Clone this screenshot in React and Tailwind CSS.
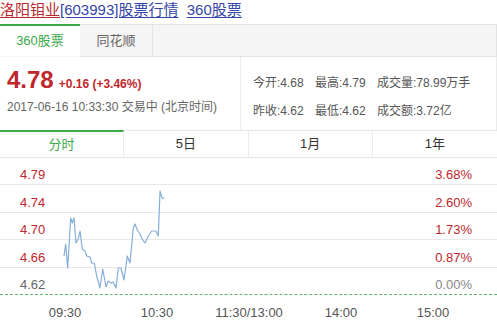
const LINE = [
  [64, 255], [65.7, 243], [67.7, 267], [70.7, 217], [72.3, 222], [74, 217], [76, 242], [78.3, 238],
  [80, 230], [82.3, 248], [85, 250], [86.7, 255], [90, 256], [91.7, 262], [94.3, 262], [96.7, 275],
  [100, 287], [102.7, 268], [106, 286], [108.3, 280], [111, 282], [113.3, 281], [116, 287], [118.3, 267],
  [121, 267], [124, 279], [127.3, 255], [130, 262], [133.3, 227], [135, 223], [137.3, 229], [140, 233],
  [142.7, 239], [145, 242], [148.3, 235], [151.7, 230], [156, 230], [158.3, 235], [160, 190], [161.7, 196],
  [164, 198],
]

const ROWS = [
  { left: '4.79', right: '3.68%', red: true },
  { left: '4.74', right: '2.60%', red: true },
  { left: '4.70', right: '1.73%', red: true },
  { left: '4.66', right: '0.87%', red: true },
  { left: '4.62', right: '0.00%', red: false },
]

const TIMES = ['09:30', '10:30', '11:30/13:00', '14:00', '15:00']

export default function App() {
  const points = LINE.map(([x, y]) => `${x},${y - 157}`).join(' ')

  return (
    <div className="w-[497px] h-[322px] overflow-hidden bg-white text-[#333]" style={{ fontFamily: '"Liberation Sans", "Noto Sans CJK SC", sans-serif' }}>

      {/* title */}
      <div className="h-[24px] pt-[1px] text-[15px] leading-[18px] whitespace-nowrap">
        <span className="text-[#b8282e] underline underline-offset-2">洛阳钼业</span>
        <span className="text-[#3446a8] underline underline-offset-2">[603993]股票行情</span>
        <span className="text-[#3446a8]">&nbsp;&nbsp;</span>
        <span className="text-[#3446a8] underline underline-offset-2">360股票</span>
      </div>

      {/* source tabs */}
      <div className="h-[33px] flex border-t border-[#e3e3e3] bg-[#f5f5f5] border-r">
        <div className="w-[80px] h-full bg-white border-t-2 border-[#3ca94a] -mt-px flex items-center justify-center text-[13px] text-[#3ca94a]">
          360股票
        </div>
        <div className="w-[73px] flex items-center justify-center text-[13px] text-[#666] border-r border-b border-[#e3e3e3]">
          同花顺
        </div>
        <div className="flex-1 border-b border-[#e3e3e3]" />
      </div>

      {/* quote */}
      <div className="h-[73px] flex border-r border-[#ececec]">
        <div className="w-[241px] border-r border-[#ececec] pl-[7px] pt-[9px]">
          <div className="flex items-baseline gap-[5px] text-[#c0272d] font-bold">
            <span className="text-[24px] leading-[28px]">4.78</span>
            <span className="text-[12px]">+0.16 (+3.46%)</span>
          </div>
          <div className="mt-[5px] text-[12px] leading-[16px] text-[#666] whitespace-nowrap">
            2017-06-16 10:33:30 交易中 (北京时间)
          </div>
        </div>
        <div className="flex-1 pl-[12px] pt-[19px] text-[12px] text-[#555] leading-[14px]">
          <div className="grid grid-cols-[62px_62px_1fr] gap-y-[14px] whitespace-nowrap">
            <span>今开:4.68</span>
            <span>最高:4.79</span>
            <span>成交量:78.99万手</span>
            <span>昨收:4.62</span>
            <span>最低:4.62</span>
            <span>成交额:3.72亿</span>
          </div>
        </div>
      </div>

      {/* period tabs */}
      <div className="h-[28px] grid grid-cols-4 border-t border-b border-[#e6e6e6] text-[13px]">
        <div className="border-t-2 border-[#3ca94a] -mt-px flex items-center justify-center text-[#3ca94a] border-r border-r-[#ececec]">分时</div>
        <div className="flex items-center justify-center border-r border-[#ececec]">5日</div>
        <div className="flex items-center justify-center border-r border-[#ececec]">1月</div>
        <div className="flex items-center justify-center">1年</div>
      </div>

      {/* chart */}
      <div className="relative">
        {ROWS.map((r, i) => (
          <div
            key={r.left}
            className={`h-[27.4px] flex items-end justify-between pl-[20px] pr-[25px] pb-[3px] text-[13px] leading-[13px] ${i === ROWS.length - 1 ? 'border-b border-dashed border-[#5fb36a]' : 'border-b border-[#e8e8e8]'}`}
          >
            <span className={r.red ? 'text-[#c0272d]' : 'text-[#666]'}>{r.left}</span>
            <span className={r.red ? 'text-[#c0272d]' : 'text-[#888]'}>{r.right}</span>
          </div>
        ))}
        <svg className="absolute left-0 top-0" width="497" height="137" viewBox="0 0 497 137">
          <polyline points={points} fill="none" stroke="#86aedb" strokeWidth="1.2" strokeLinejoin="round" />
        </svg>
      </div>

      {/* time axis */}
      <div className="pl-[19px] pt-[11px] grid grid-cols-[repeat(5,92px)] text-center text-[13px] leading-[14px] text-[#555] whitespace-nowrap">
        {TIMES.map(t => <span key={t}>{t}</span>)}
      </div>
    </div>
  )
}
